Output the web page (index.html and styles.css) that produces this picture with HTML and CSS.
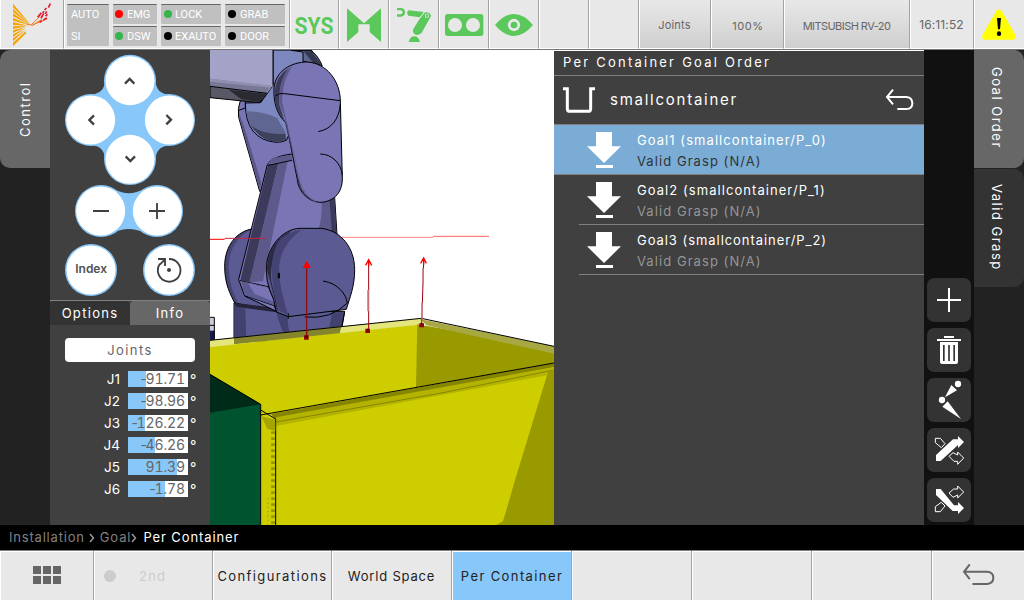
FILE: index.html
```html
<!DOCTYPE html>
<html lang="en">
<head>
<meta charset="utf-8">
<title>Per Container Goal Order</title>
<link rel="stylesheet" href="styles.css">
</head>
<body>
<div class="app">
  <header class="topbar">
    <div class="cell w64">
      <svg class="fill" viewBox="0 0 189 144">
        <g fill="#f5a300"><path d="M39 11L92 74 39 22z"/><path d="M39 26L92 75 39 36z"/><path d="M39 40L92 76 39 49z"/><path d="M39 53L90 76 39 62z"/><path d="M39 66L84 77 39 75z"/><path d="M39 79L80 78 39 87z"/><path d="M39 91L78 80 39 99z"/><path d="M39 103L78 83 39 111z"/><path d="M39 115L78 88 39 124z"/><path d="M39 128L78 93V100L39 139z"/></g>
        <g fill="none" stroke="#f47a20" stroke-width="3"><path d="M80 72L98 76 124 59M97 75L140 57M94 74L122 47"/></g>
        <g fill="none" stroke="#e3192e" stroke-width="5"><path d="M113 52l11-14M123 55l8-15M130 60l11-6M128 39l4-5M136 42l4-8M145 23l6-12M134 30l5-6M119 67l7-5M137 49l5-6"/></g>
      </svg>
    </div>
    <div class="cell status">
      <div class="chip tall"><span>AUTO</span><span>SI</span></div>
      <div class="chip c1"><i class="dot red"></i>EMG</div>
      <div class="chip c2"><i class="dot green"></i>LOCK</div>
      <div class="chip c3"><i class="dot"></i>GRAB</div>
      <div class="chip c1"><i class="dot green"></i>DSW</div>
      <div class="chip c2"><i class="dot"></i>EXAUTO</div>
      <div class="chip c3"><i class="dot"></i>DOOR</div>
    </div>
    <div class="cell w49"><svg class="fill" viewBox="0 0 48 48"><text class="sys" x="4.500" y="34" textLength="39" lengthAdjust="spacingAndGlyphs">SYS</text></svg></div>
    <div class="cell w50"><svg class="fill go" viewBox="27 0 147 144"><path d="M51 25L102 70 153 25V126L119 96V73H85V96L51 126z"/></svg></div>
    <div class="cell w50"><svg class="fill go" viewBox="177 0 147 144"><path d="M201 24h13q11 2 11 13t-11 13h-13v-7h12q5-1 5-6t-5-6h-12zM236 31L281 36 270 52 235 47Q227 38 236 31z"/><path d="M281 38Q300 34 303 48L276 97Q266 110 253 102 247 97 250 87L278 42z"/><circle cx="291" cy="47" r="6.5" fill="#e8e8e8"/><circle cx="291" cy="47" r="4"/><path d="M286 33L270 54" stroke="#e8e8e8" stroke-width="3"/><path d="M236 126Q240 109 253 109T270 126z"/></svg></div>
    <div class="cell w50"><svg class="fill go" viewBox="327 0 147 144"><rect x="345" y="42" width="115" height="66" rx="8"/><g fill="#e8e8e8"><circle cx="375" cy="75" r="21"/><circle cx="429" cy="75" r="21"/></g></svg></div>
    <div class="cell w50"><svg class="fill go" viewBox="477 0 147 144"><path d="M495 75Q522 42 552 42T609 75Q581 108 552 108T495 75z"/><circle cx="552" cy="75" r="18.500" fill="#e8e8e8"/><circle cx="552" cy="75" r="10"/></svg></div>
    <div class="cell w50"></div>
    <div class="cell w50"></div>
    <div class="cell w72 grad up">Joints</div>
    <div class="cell w73 grad hundred">100%</div>
    <div class="cell w126 grad model">MITSUBISH RV-20</div>
    <div class="cell w64 clock">16:11:52</div>
    <div class="cell w50 last"><svg class="fill" viewBox="1002 0 150 144"><path d="M1077 38L1118 110H1036z" fill="#ff0" stroke="#ff0" stroke-width="19" stroke-linejoin="round"/><path d="M1071 54h12l-3 34h-6z"/><ellipse cx="1077" cy="101" rx="6.500" ry="7"/></svg></div>
  </header>

  <main class="work">
    <nav class="rail"><div class="tab control">Control</div></nav>

    <section class="panel">
      <svg class="pad" viewBox="150 6 480 750">
        <path fill="#87c7fa" d="M315 96Q315 140 265 140L272 292Q315 292 315 340L466 340Q466 294 512 292V140Q468 140 466 96z"/>
        <g fill="#87c7fa"><circle cx="390" cy="98" r="78"/><circle cx="273" cy="216" r="78"/><circle cx="507" cy="216" r="78"/><circle cx="390" cy="333" r="78"/>
        <path d="M340 423Q387 448 432 423V554Q387 532 340 554z"/><circle cx="303" cy="489" r="78"/><circle cx="471" cy="489" r="78"/><circle cx="273" cy="666" r="78"/><circle cx="507" cy="666" r="78"/></g>
        <g fill="#fff"><circle cx="390" cy="98" r="73.500"/><circle cx="272" cy="216" r="73.500"/><circle cx="508" cy="216" r="73.500"/><circle cx="390" cy="334" r="73.500"/><circle cx="302" cy="489" r="73.500"/><circle cx="472" cy="489" r="73.500"/><circle cx="273" cy="666" r="73.500"/><circle cx="507" cy="666" r="73.500"/></g>
        <g fill="none" stroke="#404040" stroke-width="7"><path d="M375 107L389 93 403 107M377 325L391 339 405 325M282 202L268 216 282 230M499 201L513 215 499 229"/><g stroke-width="5.500"><path d="M279 489H327M447 489H495M471 465V513"/><path d="M507 633A34 34 0 1 1 480 647M474 633H495V654M495 634L480 649"/></g></g>
        <circle cx="507" cy="666" r="6" fill="#404040"/>
        <text class="index" x="226" y="676" textLength="95">Index</text>
      </svg>
      <div class="subtabs"><div class="opt">Options</div><div class="info">Info</div></div>
      <div class="joints-btn">Joints</div>
      <div class="joints">
        <div class="row"><span class="jl">J1</span><div class="val"><i class="bar" style="width:18px"></i><b><u>-</u>91.71</b></div><span class="deg">°</span></div>
        <div class="row"><span class="jl">J2</span><div class="val"><i class="bar" style="width:18px"></i><b><u>-</u>98.96</b></div><span class="deg">°</span></div>
        <div class="row"><span class="jl">J3</span><div class="val"><i class="bar" style="width:17px"></i><b><u>-</u>126.22</b></div><span class="deg">°</span></div>
        <div class="row"><span class="jl">J4</span><div class="val"><i class="bar" style="width:27px"></i><b><u>-</u>46.26</b></div><span class="deg">°</span></div>
        <div class="row"><span class="jl">J5</span><div class="val"><i class="bar" style="width:49px"></i><b>91.39</b></div><span class="deg">°</span></div>
        <div class="row"><span class="jl">J6</span><div class="val"><i class="bar" style="width:37px"></i><b><u>-</u>1.78</b></div><span class="deg">°</span></div>
      </div>
    </section>

    <svg class="scene" viewBox="6 6 1032 1425">
      <rect x="6" y="6" width="1032" height="1425" fill="#fff"/>
      <g stroke="#000" stroke-width="3" stroke-linejoin="round">
        <path fill="#454576" d="M130 543C75 555 50 605 50 655 50 710 68 740 80 765L205 790 200 560z"/>
        <path fill="#5b5a92" stroke="none" d="M130 545C88 560 62 610 62 655 62 700 75 735 90 765L205 788 200 560z"/>
        <path fill="#5b5a92" d="M78 765L205 790 410 790 395 880 78 880z"/>
        <path fill="#434170" stroke="none" d="M79 772L112 782 115 880H79z"/>
        <path fill="#25243a" stroke="none" d="M79 764L205 780V793L84 776z"/>
        <path fill="#434170" stroke="none" d="M205 790L240 806Q235 850 262 880H240Q215 840 205 790zM372 794L410 791 398 850H362z"/>
        <path fill="#7a76b5" d="M97 158Q88 180 92 208L155 430 270 430 260 160z"/>
        <path fill="#5a5787" stroke="none" d="M93 195L108 235 160 405 155 425 94 210z"/>
        <path fill="none" d="M90 188L112 180V160"/>
        <path fill="#7d87c0" d="M195 6H310L342 52 235 277Q220 283 205 283 112 275 112 165L158 164 195 112z"/>
        <path fill="#5f6691" stroke="none" d="M114 190Q170 190 207 210L232 252 234 275 205 281Q130 275 114 190z"/>
        <path fill="#3d415c" stroke="none" d="M128 230Q160 262 232 257L234 276 205 282Q160 280 128 230z"/>
        <path fill="#5f6691" d="M250 7H306Q328 18 342 52L285 40V12z"/>
        <path fill="#34384f" stroke="none" d="M287 10L310 10 342 52 315 44z"/>
        <path fill="#a3a3c8" stroke="none" d="M6 6H195V112L175 137 6 116z"/>
        <path fill="#777796" stroke="none" d="M6 92L190 114 175 136 6 115z"/><path fill="#8f8fb0" stroke="none" d="M6 92L190 113 185 119 6 101z"/>
        <path fill="#595866" d="M6 115L178 136 155 164 6 149z"/>
        <path fill="#2a2a32" stroke="none" d="M62 125L177 138 155 162 100 154z"/>
        <path fill="none" d="M195 6V112"/>
        <path fill="#7a76b5" d="M178 350Q190 326 250 318L380 448 387 560 387 710 180 716 205 790 110 744 92 695z"/>
        <path fill="#3c3a5a" stroke="none" d="M180 350L211 346 125 702 97 697z"/>
        <path fill="#5d5a8b" stroke="none" d="M211 346L239 340 165 700 125 702z"/>
        <path fill="#5d5a8b" stroke="none" d="M180 348L192 330 250 320 252 336z"/>
        <path fill="#5d5a8b" stroke="none" d="M340 450H366L374 555H328Q345 510 340 450z"/><path fill="#3c3a5a" stroke="none" d="M364 450H380L386 560H372z"/>
        <path fill="none" d="M180 352L252 337M96 698L180 716M108 742L205 775"/>
        <path fill="#5b5a92" stroke="none" d="M99 699L180 717 205 774 110 742z"/><path fill="#7a76b5" stroke="none" d="M120 705L180 719 200 762 140 738z"/>
        <path fill="#7a76b5" d="M198 120C203 68 250 42 298 42 355 45 396 98 397 158L403 390C404 440 370 463 335 463 295 460 270 425 268 395L235 225C205 200 196 160 198 120z"/>
        <path fill="#3c3a5a" stroke="none" d="M200 130Q204 83 242 60Q209 108 214 170L230 220 256 330 274 400Q282 442 322 461 275 443 269 396L236 224Q198 190 200 130z"/>
        <path fill="#5d5a8b" stroke="none" d="M238 64L253 55Q224 95 222 160L238 230 277 400Q289 445 326 461H320Q283 440 274 390L229 205 214 165Q210 110 238 64z"/>
        <path fill="none" d="M202 144Q215 133 230 137L397 158M397 168C393 215 370 243 331 251M337 318C370 318 400 345 403 382"/>
        <path fill="#5b5a92" d="M175 665C175 595 225 543 275 541H340C400 548 440 600 440 665 440 715 425 750 415 784L241 806 205 792Q200 755 185 725 175 700 175 665z"/>
        <path fill="#2c2b45" stroke="none" d="M177 665C178 605 211 563 250 548 206 590 184 640 190 700L212 792 207 787Q196 735 177 665z"/>
        <path fill="#454374" stroke="none" d="M210 582Q230 553 280 545 220 590 214 650 209 700 240 800L215 790Q188 715 192 650 195 610 210 582z"/>
        <path fill="none" d="M345 699C390 705 415 740 418 765Q370 815 290 807M241 796V812M410 791L398 852"/>
        <path d="M211 676h3v14h-3z"/>
      </g>
      <path fill="#c9c9dc" d="M6 810h13v40H6z"/><path fill="#18184e" d="M6 848h14v34H6z"/><path fill="none" stroke="#000" stroke-width="3" d="M6 808H19V875M6 832H19"/>
      <g>
        <path fill="#e5e57d" d="M6 877L640 811V830L6 897z"/><path fill="#85852e" d="M78 870L400 835 395 857 78 889z"/>
        <path fill="#cdcd00" d="M6 897L630 830V1030L160 1105 6 1000z"/>
        <path fill="#999900" d="M628 829L1038 900V950L624 1018z"/><path fill="#a8a843" d="M636 813L1038 895V917L655 832z"/>
        <path fill="#cdcd00" d="M158 1103L1038 945V1431H158z"/>
        <path fill="#858500" d="M190 1098L1038 945V958L204 1118z"/><path fill="#b4b400" d="M204 1108L1038 957V978L204 1134z"/>
        <path fill="none" stroke="#858500" stroke-width="3" d="M204 1122L700 1035 1038 966"/>
        <path fill="#999900" d="M1020 972L1038 965V1431H865L885 1420Q900 1370 920 1300z"/>
        <path fill="none" stroke="#000" stroke-width="3" d="M6 877L640 811 1038 895M158 1101L1038 945M158 1086L203 1113V1431"/>
        <path fill="#a5a500" d="M160 1105L202 1115V1148L178 1143z"/>
        <path fill="none" stroke="#999900" stroke-width="11" stroke-dasharray="8 10" d="M195 1150V1431"/><path fill="none" stroke="#b4b400" stroke-width="6" stroke-dasharray="4 9" d="M180 1350V1431"/>
        <path fill="#00532f" d="M6 979L158 1069V1431H6z"/><path fill="#002b18" d="M6 979L158 1069 6 1094z"/>
        <path fill="none" stroke="#000" stroke-width="3" d="M6 979L158 1069V1431"/>
      </g>
      <g fill="none" stroke-width="3"><path stroke="#f00" d="M6 574H50"/><path stroke="#ca2342" d="M50 571H172"/><path stroke="#ff8080" d="M402 568H675"/><path stroke="#ff6060" d="M675 565H843"/>
        <path stroke="#8e0c18" stroke-width="4" d="M296 655V868"/><path stroke="#9b0010" d="M482 645V847M647 640L641 831"/><path stroke="#cf8080" stroke-width="5" d="M480 725V790M645 660V712M642 765V812"/></g>
      <path fill="#f00" d="M296 638L309 660H284z"/><path fill="none" stroke="#f00" stroke-width="4" d="M473 652L482 635 491 652M638 646L647 630 655 646M482 635V655M647 630V650"/>
      <path fill="#97000d" d="M288 862h14v13h-14zM472 842h14v13h-14zM634 826h14v12h-14z"/>
      <path d="M293 863h6v6h-6zM477 842h5v5h-5zM638 824h5v5h-5z" fill="#300"/>
    </svg>

    <section class="goals">
      <h1 class="title">Per Container Goal Order</h1>
      <div class="container-row">
        <svg class="fill" viewBox="6 84 1110 144"><g fill="none" stroke="#fff"><path stroke-width="9" d="M33 122H46V182Q46 190 54 190H108Q116 190 116 182V122H129"/><path stroke-width="6" d="M1023 125L1005 147 1023 169M1005 147H1064Q1081 149 1081 166T1064 183H1036"/></g></svg>
        <span class="cname">smallcontainer</span>
      </div>
      <div class="goal sel"><svg class="arrow" viewBox="0 0 102 108"><path d="M27 0H75V43H102L51 93 0 43H27zM27 99H78V108H27z"/></svg><div class="gt"><p>Goal1 (smallcontainer/P_0)</p><p class="sub">Valid Grasp (N/A)</p></div></div>
      <div class="goal"><svg class="arrow" viewBox="0 0 102 108"><path d="M27 0H75V43H102L51 93 0 43H27zM27 99H78V108H27z"/></svg><div class="gt"><p>Goal2 (smallcontainer/P_1)</p><p class="sub">Valid Grasp (N/A)</p></div></div>
      <div class="goal"><svg class="arrow" viewBox="0 0 102 108"><path d="M27 0H75V43H102L51 93 0 43H27zM27 99H78V108H27z"/></svg><div class="gt"><p class="g3">Goal3 (smallcontainer/P_2)</p><p class="sub">Valid Grasp (N/A)</p></div></div>
    </section>

    <aside class="tools">
      <div class="tool"><svg class="fill" viewBox="21 18 132 132"><path fill="none" stroke="#fff" stroke-width="6" d="M51 84H123M87 48V120"/></svg></div>
      <div class="tool"><svg class="fill" viewBox="21 168 132 132"><path fill="#fff" d="M72 192H102V198H72zM51 201H123V207H51zM60 210H114V270Q114 276 108 276H66Q60 276 60 270z"/><path stroke="#333" stroke-width="5" d="M71.500 219V267M87 219V267M102.500 219V267"/></svg></div>
      <div class="tool"><svg class="fill" viewBox="21 318 132 132"><g fill="#fff"><circle cx="114" cy="336" r="9.500"/><circle cx="66" cy="384" r="9.500"/><path d="M75 376L94 339 111 355zM67 404L83 388 123 441z"/></g></svg></div>
      <div class="tool"><svg class="fill" viewBox="21 468 132 132"><path fill="none" stroke="#fff" stroke-width="3" d="M46 499H61L75 515 64 527 46 512zM87 553L99 542 113 549V540L131 558 113 577V568H102z"/><path fill="#fff" d="M48 549L99 502H114V492L132 510 114 528V519L62 567H48z"/></svg></div>
      <div class="tool"><svg class="fill" viewBox="21 618 132 132"><path fill="none" stroke="#fff" stroke-width="3" d="M87 663L101 651H113V642L131 660 113 678V669L99 676zM46 719V704L64 691 75 702 61 719z"/><path fill="#fff" d="M48 651H62L102 700H114V690L132 708 114 726V717H98L48 669z"/></svg></div>
    </aside>

    <nav class="rail right"><div class="tab active">Goal Order</div><div class="tab dim">Valid Grasp</div></nav>
  </main>

  <div class="crumbs"><span class="k1">Installation</span><svg class="chev k2" viewBox="0 0 6 10"><path d="M1 1l3.500 4L1 9"/></svg><span class="k3">Goal</span><svg class="chev k4" viewBox="0 0 6 10"><path d="M1 1l3.500 4L1 9"/></svg><span class="cur">Per Container</span></div>

  <footer class="bottom">
    <div class="fc f94"><svg class="menu" viewBox="0 0 84 54"><path fill="#666" d="M0 0h24v24H0zM30 0h24v24H30zM60 0h24v24H60zM0 30h24v24H0zM30 30h24v24H30zM60 30h24v24H60z"/></svg></div>
    <div class="fc f119 second"><i></i><span>2nd</span></div>
    <div class="fc f119 wide">Configurations</div>
    <div class="fc">World Space</div>
    <div class="fc on wide">Per Container</div>
    <div class="fc"></div><div class="fc"></div><div class="fc"></div>
    <div class="fc f92"><svg class="back" viewBox="786 118 98 68"><path fill="none" stroke="#666" stroke-width="6" d="M809 122L792 144 809 166M792 144H862Q879 146 879 162T862 180H817"/></svg></div>
  </footer>
</div>
</body>
</html>
```
FILE: styles.css
```css
* { box-sizing: border-box; margin: 0; padding: 0; }
body { font-family: Inter, "Liberation Sans", sans-serif; font-size: 13px; width: 1024px; height: 600px; overflow: hidden; background: #222; }
svg { display: block; }
.fill { width: 100%; height: 100%; }
.app { width: 1024px; height: 600px; display: flex; flex-direction: column; }

.topbar { height: 50px; display: flex; background: #e8e8e8; border-bottom: 1px solid #777; }
.cell { flex: none; width: 50px; height: 49px; border-right: 1px solid #a3a3a3; border-bottom: 1px solid #fff; box-shadow: inset 1px 0 #fff; display: flex; align-items: center; justify-content: center; color: #666; }
.cell.last { border-right: 0; }
.w49 { width: 49px; } .w50 { width: 50px; } .w64 { width: 64px; } .w72 { width: 72px; } .w73 { width: 73px; } .w126 { width: 126px; }
.grad { background: linear-gradient(#e8e8e8, #cfcfcf); font-size: 11px; letter-spacing: .2px; padding-top: 3px; }
.up { padding-top: 1px; }
.hundred { letter-spacing: .6px; padding-left: 2px; }
.model { letter-spacing: -.55px; }
.clock { font-size: 12px; letter-spacing: .1px; }
.go { fill: #5ac85a; }
.sys { font: bold 24.3px Roboto, sans-serif; fill: #5ac85a; }
.status { width: 226px; display: grid; grid-template-columns: 42px 44px 60px 60px; grid-template-rows: 20px 20px; column-gap: 4px; row-gap: 2px; padding: 1px 0 0 3px; justify-content: start; align-content: center; }
.chip { background: #c0c0c0; border-top: 1px solid #666; border-radius: 1px; color: #fff; font: 400 11px/19px Roboto, sans-serif; display: flex; align-items: center; gap: 4px; padding-left: 2px; }
.chip.c2, .chip.c3 { padding-left: 3px; }
.chip.c2 { gap: 3px; }
.chip.tall { grid-row: 1 / 3; flex-direction: column; align-items: flex-start; gap: 3px; padding-left: 4px; }
.dot { width: 8px; height: 8px; border-radius: 50%; background: #000; }
.dot.red { background: #f00; } .dot.green { background: #36b34a; }

.work { height: 475px; display: flex; }
.rail { width: 50px; background: #222; }
.tab { width: 50px; height: 118px; writing-mode: vertical-rl; display: flex; align-items: center; justify-content: center; color: #fff; letter-spacing: 1.5px; background: #676767; }
.control { transform: rotate(180deg); border-radius: 0 10px 10px 0; padding-right: 0; }
.right .tab { border-radius: 0 10px 10px 0; padding: 0 4px 2px 0; }
.right .dim { background: #333; margin-top: 1px; }

.panel { width: 160px; background: #404040; color: #fff; }
.pad { width: 160px; height: 250px; }
.index { font: 600 36px Inter, sans-serif; fill: #505050; }
.subtabs { display: flex; border-top: 1px solid #808080; height: 25px; line-height: 25px; text-align: center; letter-spacing: 1.3px; }
.opt { width: 80px; background: #333; border-radius: 4px 4px 0 0; }
.info { width: 80px; background: #676767; border-radius: 4px 4px 0 0; }
.joints-btn { margin: 13px 15px 9px; height: 24px; line-height: 24px; background: #fff; border-radius: 4px; color: #666; text-align: center; letter-spacing: 1.4px; }
.joints { display: flex; flex-direction: column; gap: 6px; }
.row { display: flex; height: 16px; line-height: 16px; }
.jl { width: 78px; padding-right: 8px; text-align: right; font-size: 13.5px; }
.val { width: 60px; background: #fff; display: grid; }
.val > * { grid-area: 1 / 1; }
.bar { background: #87c7fa; }
.val b { font-weight: 400; color: #666; text-align: right; padding-right: 3px; font-size: 14px; font-variant-numeric: tabular-nums; letter-spacing: -.1px; white-space: nowrap; }
.val u { text-decoration: none; font-variant-numeric: normal; margin-right: -1.5px; }
.deg { padding-left: 2px; font-size: 14px; line-height: 18px; }
.scene { width: 344px; height: 475px; }

.goals { width: 370px; background: #404040; border-top: 1px solid #fff; color: #fff; }
.title { font-size: 13px; font-weight: 400; height: 25px; line-height: 23px; padding-left: 9px; border-bottom: 1px solid #808080; letter-spacing: 2.23px; white-space: nowrap; }
.container-row { height: 49px; display: grid; border-bottom: 1px solid #808080; }
.container-row > * { grid-area: 1 / 1; }
.cname { font-size: 15px; line-height: 48px; padding-left: 56px; letter-spacing: 1.75px; }
.goal { height: 50px; margin-left: 25px; padding-left: 8px; display: flex; border-bottom: 1px solid #808080; }
.goal.sel { margin-left: 0; padding-left: 33px; background: #7aacd5; }
.arrow { width: 34px; height: 36px; margin-top: 7px; fill: #fff; }
.gt { padding: 5px 0 0 16px; letter-spacing: 1.06px; }
.gt p { height: 21px; line-height: 21px; }
.gt .g3 { letter-spacing: .95px; }
.gt .sub { color: #959595; }
.sel .gt .sub { color: #333; }
.tools { width: 50px; background: #111; padding: 228px 3px 0; display: flex; flex-direction: column; gap: 6px; }
.tool { width: 44px; height: 44px; background: #333; border-radius: 7px; }

.crumbs { height: 25px; line-height: 25px; background: #000; color: #808080; display: flex; align-items: center; padding-left: 9px; letter-spacing: .9px; }
.k1 { letter-spacing: .8px; }
.chev { width: 6px; height: 10px; fill: none; stroke: #999; stroke-width: 1.5; }
.k2 { margin: 0 5px 0 4px; } .k4 { margin-right: 6px; } .cur { color: #fff; }
.bottom { height: 50px; background: #e8e8e8; border-top: 1px solid #808080; display: flex; color: #222; }
.fc { width: 120px; border-right: 1px solid #a3a3a3; box-shadow: inset 1px 1px #fff; display: flex; align-items: center; justify-content: center; letter-spacing: .8px; white-space: nowrap; }
.wide { letter-spacing: 1.4px; padding-left: 1px; }
.f94 { width: 94px; } .f119 { width: 119px; } .f92 { width: 92px; border: 0; }
.on { background: #87c7fa; }
.menu { width: 28px; height: 18px; margin-top: -2px; }
.back { width: 33px; height: 23px; margin-top: -2px; }
.second { color: #ccc; justify-content: flex-start; padding-left: 10px; letter-spacing: 1.2px; }
.second i { width: 12px; height: 12px; border-radius: 50%; background: #ccc; margin-right: 23px; }
```
